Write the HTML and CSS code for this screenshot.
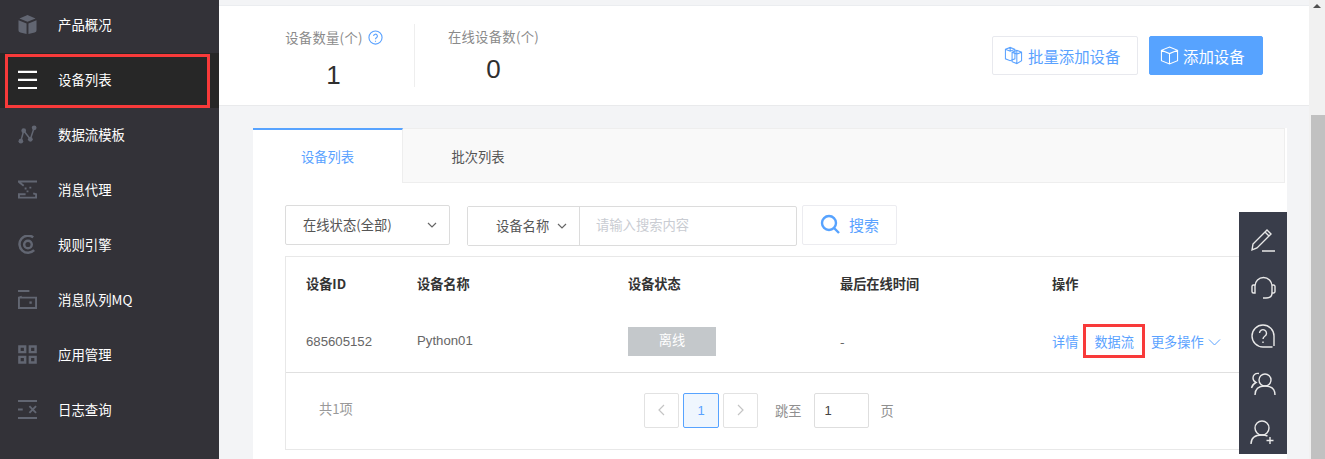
FILE: index.html
```html
<!DOCTYPE html>
<html lang="zh-CN">
<head>
<meta charset="utf-8">
<title>设备列表</title>
<link rel="stylesheet" href="styles.css">
</head>
<body>
<div class="page">
  <nav class="sidebar">
    <a class="nav-item"><svg class="nav-icon" viewBox="0 0 20 20"><path class="fill" d="M10 0l8.500 3.600L10 7.200 1.500 3.600zM.5 5.500l8.500 3.500v11l-6.500-1.500A2.500 2.500 0 0 1 .5 16zM19.500 5.500L11 9v11l6.500-1.500a2.500 2.500 0 0 0 2-2.500z"/></svg><span>产品概况</span></a>
    <a class="nav-item active"><svg class="nav-icon" viewBox="0 0 20 20"><path class="white" d="M0 2h20M0 10.500h20M0 19h20"/></svg><span>设备列表</span><i class="red-box nav-box"></i></a>
    <a class="nav-item"><svg class="nav-icon" viewBox="0 0 20 20"><path class="line" d="M3 17L6 6l7 9 4-12"/><circle class="fill" cx="3" cy="17" r="2.500"/><circle class="fill" cx="6" cy="6" r="2.500"/><circle class="fill" cx="13" cy="15" r="2.500"/><circle class="fill" cx="17" cy="3" r="2.500"/></svg><span>数据流模板</span></a>
    <a class="nav-item"><svg class="nav-icon" viewBox="0 0 20 20"><path class="thick" d="M0 1.500h20M1 2l5 4M0 18.500h20M1 18v-3h7M19 18v-3l-3-1"/><path class="thick" d="M7 9h2M12 8h2M9 12h2"/></svg><span>消息代理</span></a>
    <a class="nav-item"><svg class="nav-icon" viewBox="0 0 20 20"><path class="heavy" d="M16 2.500A9 9 0 1 0 17 16"/><circle class="heavy" cx="10.500" cy="10" r="4"/></svg><span>规则引擎</span></a>
    <a class="nav-item"><svg class="nav-icon" viewBox="0 0 20 20"><path class="thick" d="M0 1h12M1 19V8h18v11zM1 8l3-1"/><rect class="fill" x="12" y="12" width="2.500" height="2.500"/></svg><span>消息队列MQ</span></a>
    <a class="nav-item"><svg class="nav-icon" viewBox="0 0 20 20"><path class="heavy" d="M1.500 1.500h6v6h-6zM12.500 1.500h6v6h-6zM1.500 12.500h6v6h-6zM12.500 12.500h6v6h-6z"/></svg><span>应用管理</span></a>
    <a class="nav-item"><svg class="nav-icon" viewBox="0 0 20 20"><path class="thick" d="M0 1h20M0 19h20M0 10h5M12 6.500l7 7M19 6.500l-7 7"/></svg><span>日志查询</span></a>
  </nav>

  <main class="main">
    <header class="summary">
      <div class="stat stat-first">
        <div class="stat-label">设备数量(个)<svg class="help" viewBox="0 0 16 16"><circle cx="8" cy="8" r="7"/><path d="M6 6.500a2 2 0 1 1 3 1.700c-.7.4-1 .8-1 1.600M8 11.500v1"/></svg></div>
        <div class="stat-value">1</div>
      </div>
      <div class="stat stat-second">
        <div class="stat-label">在线设备数(个)</div>
        <div class="stat-value">0</div>
      </div>
      <div class="summary-actions">
        <button class="btn btn-outline"><svg class="btn-icon" viewBox="0 0 20 20"><path d="M1.500 3.500l5-2 5 2v10l-5 2-5-2zM6.500 1.500v4M1.500 3.500l5 2 5-2"/><path d="M8.500 6.500l5-2 5 2v9l-5 3-5-2zM13.500 4.500v4M8.500 6.500l5 2 5-2M13.500 8.500v10"/></svg>批量添加设备</button>
        <button class="btn btn-primary"><svg class="btn-icon" viewBox="0 0 20 20"><path d="M10 1l8.500 3.500v11L10 19l-8.500-3.500v-11zM1.500 4.500L10 8l8.500-3.500M10 8v11"/></svg>添加设备</button>
      </div>
    </header>

    <section class="panel">
      <div class="tabs">
        <div class="tab tab-active">设备列表</div>
        <div class="tab">批次列表</div>
      </div>
      <div class="panel-body">
        <div class="filters">
          <div class="select status-select"><span>在线状态(全部)</span><svg class="chev" viewBox="0 0 10 6"><path d="M1 1l4 4 4-4"/></svg></div>
          <div class="search-group">
            <div class="select name-select"><span>设备名称</span><svg class="chev" viewBox="0 0 10 6"><path d="M1 1l4 4 4-4"/></svg></div>
            <div class="search-input">请输入搜索内容</div>
          </div>
          <button class="search-btn"><svg class="search-icon" viewBox="0 0 20 20"><circle cx="9" cy="9" r="7"/><path d="M14 14l5 5"/></svg>搜索</button>
        </div>

        <div class="table">
          <div class="row row-head">
            <div>设备ID</div><div>设备名称</div><div>设备状态</div><div>最后在线时间</div><div>操作</div>
          </div>
          <div class="row row-data">
            <div class="cell-id">685605152</div>
            <div class="cell-name">Python01</div>
            <div><span class="badge">离线</span></div>
            <div class="cell-time">-</div>
            <div class="actions">
              <a>详情</a>
              <a class="action-flow">数据流<i class="red-box flow-box"></i></a>
              <a class="action-more">更多操作<svg class="more-chev" viewBox="0 0 12 7"><path d="M.5.500L6 6 11.500.500"/></svg></a>
            </div>
          </div>
          <div class="table-foot">
            <span class="total">共1项</span>
            <div class="pager">
              <span class="page-btn"><svg class="pg-chev" viewBox="0 0 7 12"><path d="M6 1L1 6l5 5"/></svg></span>
              <span class="page-btn page-current">1</span>
              <span class="page-btn"><svg class="pg-chev" viewBox="0 0 7 12"><path d="M1 1l5 5-5 5"/></svg></span>
              <span class="jump-label">跳至</span>
              <span class="jump-input">1</span>
              <span class="jump-unit">页</span>
            </div>
          </div>
        </div>
      </div>
    </section>
  </main>

  <aside class="scrollbar"><i class="scroll-up"></i><i class="scroll-thumb"></i></aside>

  <div class="toolbar">
    <svg viewBox="0 0 26 26"><path d="M2 23l1-6L17 3l4 4L7 21zM15 5l4 4M12 24h13"/></svg>
    <svg viewBox="0 0 26 26"><path d="M5 14V11a8.500 8.500 0 0 1 17 0v3M5 10H3.500A1.500 1.500 0 0 0 2 11.500v5A1.500 1.500 0 0 0 3.500 18H5zM22 10h1.500a1.500 1.500 0 0 1 1.500 1.500v5a1.500 1.500 0 0 1-1.500 1.500H22zM22 18c0 3-2 5-6 5h-3"/></svg>
    <svg viewBox="0 0 26 26"><path d="M24 23v-10A11 11 0 1 0 13 24h9.500M9.500 10a3.500 3.500 0 1 1 5.500 3c-1.500 1-2 1.500-2 3M13 18.500v1.500"/></svg>
    <svg viewBox="0 0 26 26"><circle cx="15" cy="9" r="6"/><path d="M5 24c0-6 4-9 10-9s10 3 10 9M9 2.500C5 2 3 4 3 7c0 2 1 3.500 3 4.500-2 1-4 3-4.500 5.500"/></svg>
    <svg viewBox="0 0 26 26"><circle cx="12" cy="9" r="7"/><path d="M1 25c0-6 4-9 11-9 2 0 4 .3 5.500 1M20 18v7M16.500 21.500h7"/></svg>
  </div>
</div>
</body>
</html>
```

FILE: styles.css
```css
* { box-sizing: border-box; }
html, body { margin: 0; height: 100%; overflow: hidden; }
body { font-family: "Noto Sans CJK SC", "Liberation Sans", sans-serif; font-size: 13.3px; color: #333; background: #f3f4f6; }
.page { position: relative; display: flex; width: 1325px; height: 459px; overflow: hidden; }

/* sidebar */
.sidebar { flex: 0 0 219px; background: #333238; }
.nav-item { position: relative; display: flex; align-items: center; height: 55px; padding: 0 0 3px 18px; color: #fff; font-size: 13.4px; }
.nav-item:first-child { height: 53px; padding-bottom: 4px; }
.nav-item:first-child span { padding-bottom: 2px; }
.nav-item.active { background: #272727; }
.nav-icon { width: 19px; height: 19px; margin-right: 21px; flex: none; }
.nav-icon .fill { fill: #626672; }
.nav-icon .line { fill: none; stroke: #626672; stroke-width: 1.600; }
.nav-icon .thick { fill: none; stroke: #626672; stroke-width: 2; }
.nav-icon .heavy { fill: none; stroke: #626672; stroke-width: 2.600; }
.nav-icon .white { fill: none; stroke: #fff; stroke-width: 2.400; }
.red-box { position: absolute; border: 3px solid #f83a3a; pointer-events: none; }
.nav-box { left: 5px; top: 1px; width: 205px; height: 54px; }

/* main */
.main { flex: 1; min-width: 0; padding-top: 5px; }
.summary { display: flex; height: 101px; padding-right: 46px; background: #fff; border-top: 1px solid #ebedf0; border-bottom: 1px solid #e9eaec; }
.stat { width: 161px; text-align: center; margin-left: 34px; height: 63px; margin-top: 18px; }
.stat-first { border-right: 1px solid #eeeeee; width: 162px; }
.stat-second { margin-left: 0; width: 157px; }
.stat-label { font-size: 13.3px; line-height: 20px; color: #8a8a8a; letter-spacing: .3px; }
.stat-first .stat-label { padding-top: 4px; padding-left: 1px; }
.stat-second .stat-label { padding-top: 3px; }
.stat-value { font-size: 26px; line-height: 30px; color: #2f2f2f; font-family: "Liberation Sans", sans-serif; }
.stat-first .stat-value { margin-top: 12px; }
.stat-second .stat-value { margin-top: 7px; }
.help { width: 15px; height: 15px; margin-left: 5px; vertical-align: -2px; fill: none; stroke: #5aa2ff; stroke-width: 1.200; }
.summary-actions { display: flex; gap: 11px; margin-left: auto; padding-top: 30px; }
.btn { display: flex; align-items: center; height: 39px; padding: 0 0 0 10px; border-radius: 2px; font: 400 15.400px "Noto Sans CJK SC", sans-serif; }
.btn-outline { width: 146px; background: #fff; border: 1px solid #e8e9ee; color: #5aa2ff; padding-left: 11px; }
.btn-primary { width: 114px; background: #57a3ff; border: 1px solid #57a3ff; color: #fff; }
.btn-primary .btn-icon { margin-right: 4px; }
.btn-icon { width: 19px; height: 19px; margin-right: 5px; fill: none; stroke: currentColor; stroke-width: 1.100; }

.panel { margin: 22px 22px 0 34px; background: #fff; height: 340px; }
.tabs { display: flex; height: 55px; background: #f9f9f9; border: 1px solid #eeeeee; border-left: 0; margin-right: 2px; }
.tab { width: 150px; height: 54px; display: flex; align-items: center; justify-content: center; color: #555; margin-top: -1px; padding-top: 3px; }
.tab-active { width: 150px; color: #5aa2ff; background: #fff; height: 55px; border-top: 2px solid #57a3ff; border-right: 1px solid #eeeeee; padding-top: 0; padding-bottom: 1px; }
.panel-body { padding: 22px 32px 0; }
.filters { display: flex; align-items: flex-start; height: 51px; }
.select { display: flex; align-items: center; border: 1px solid #dcdcdc; border-radius: 2px; color: #555; background: #fff; }
.select span { padding-bottom: 2px; }
.status-select { width: 165px; height: 40px; padding: 0 12px 0 17px; justify-content: space-between; }
.search-group { display: flex; width: 330px; height: 40px; margin: 1px 0 0 17px; border: 1px solid #dcdcdc; border-radius: 2px; }
.name-select { width: 112px; border: 0; border-right: 1px solid #dcdcdc; border-radius: 0; padding-left: 28px; gap: 8px; }
.search-input { flex: 1; display: flex; align-items: center; padding: 0 0 3px 16px; color: #c9ccd2; }
.chev { width: 10px; height: 6px; fill: none; stroke: #666; stroke-width: 1.200; }
.search-btn { display: flex; align-items: center; width: 95px; height: 40px; margin-left: 5px; padding: 0 0 2px 17px; background: #fff; border: 1px solid #ececf0; border-radius: 2px; color: #5aa2ff; font: 400 15px "Noto Sans CJK SC", sans-serif; }
.search-icon { width: 20px; height: 20px; margin-right: 9px; fill: none; stroke: #57a3ff; stroke-width: 2.400; }

.table { border: 1px solid #e8e8e8; height: 194px; font-size: 13.2px; }
.row { display: grid; grid-template-columns: 131px 211px 212px 212px 1fr; align-items: center; }
.row > div:first-child { padding-left: 20px; }
.row-head { height: 55px; font-weight: 700; color: #333; padding-bottom: 2px; }
.row-data { height: 61px; border-bottom: 1px solid #e0e0e0; color: #666; padding-bottom: 2px; }
.cell-id { font: 13.200px "Liberation Sans", sans-serif; padding-top: 1px; }
.cell-name { font: 13.200px "Liberation Sans", sans-serif; padding-bottom: 1px; }
.cell-time { padding-top: 1px; }
.badge { display: block; width: 88px; height: 29px; line-height: 26px; background: #c4c8cb; color: #fff; text-align: center; }
.actions { display: flex; align-items: center; color: #5aa2ff; white-space: nowrap; }
.action-flow { position: relative; margin-left: 16px; }
.flow-box { left: -11px; top: -8px; width: 62px; height: 34px; }
.action-more { margin-left: 17px; display: flex; align-items: center; }
.more-chev { width: 13px; height: 7px; margin: 2px 0 0 4px; fill: none; stroke: #5aa2ff; stroke-width: 1; }
.table-foot { display: flex; align-items: flex-start; height: 75px; padding-left: 33px; color: #999; }
.total { padding-top: 26px; width: 325px; }
.pager { display: flex; align-items: center; margin-top: 19px; height: 36px; }
.page-btn { display: flex; align-items: center; justify-content: center; width: 35px; height: 35px; margin-right: 4px; border: 1px solid #e2e2e2; border-radius: 2px; color: #5aa2ff; font: 13px "Liberation Sans", sans-serif; }
.page-current { width: 36px; background: #eff6fe; border-color: #57a3ff; }
.pg-chev { width: 7px; height: 12px; fill: none; stroke: #c4c4c4; stroke-width: 1.200; }
.jump-label { margin-left: 13px; color: #8f8f8f; }
.jump-input { display: flex; align-items: center; width: 55px; height: 35px; margin: 1px 0 0 13px; padding-left: 9px; border: 1px solid #dedede; border-radius: 2px; color: #444; font: 13px "Liberation Sans", sans-serif; }
.jump-unit { margin-left: 11px; color: #8f8f8f; }

/* scrollbar */
.scrollbar { flex: 0 0 16px; background: #f1f1f1; position: relative; }
.scroll-up { position: absolute; left: 4px; top: 4px; border: 4px solid transparent; border-top: 0; border-bottom: 4px solid #505050; }
.scroll-thumb { position: absolute; left: 2px; right: 0; top: 115px; bottom: 0; background: #c1c1c1; }

/* floating toolbar */
.toolbar { position: absolute; left: 1239px; top: 212px; width: 48px; height: 242px; background: #393d4a; display: flex; flex-direction: column; align-items: center; padding-top: 15px; gap: 22px; }
.toolbar svg { width: 26px; height: 26px; fill: none; stroke: #e8e8e8; stroke-width: 1.400; }
```
